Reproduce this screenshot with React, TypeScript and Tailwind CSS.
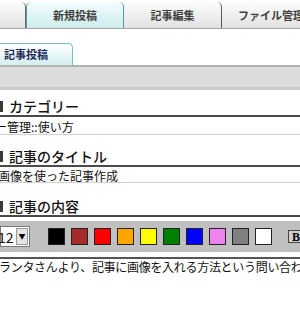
const FONT = "font-['Noto_Sans_CJK_JP','Noto_Sans',sans-serif]"

const SWATCHES = [
  'bg-[#000000]',
  'bg-[#a52a2a]',
  'bg-[#ff0000]',
  'bg-[#ffa500]',
  'bg-[#ffff00]',
  'bg-[#008000]',
  'bg-[#0000ff]',
  'bg-[#ee82ee]',
  'bg-[#808080]',
  'bg-[#ffffff]',
]

const Heading = ({ label }: { label: string }) => (
  <div className="flex h-[19px] items-center border-b-2 border-[#4a4a4a]">
    <span className="ml-[-7px] h-[11px] w-[10px] bg-[#3a3a3a]" />
    <span className="ml-[6px] text-[14px] font-medium leading-[19px] text-[#111]">{label}</span>
  </div>
)

export default function App() {
  return (
    <div className={`h-[320px] w-[300px] overflow-hidden bg-white ${FONT}`}>
      {/* main tabs */}
      <div className="flex h-[29px] border-b border-[#a8a8a8] bg-gradient-to-b from-[#ffffff] to-[#e2e2e2] pt-[2px]">
        <div className="w-[26px] shrink-0 rounded-tr-[5px] border-r border-[#6a6a6a]" />
        <div className="flex w-[98px] shrink-0 items-center justify-center rounded-t-[5px] border-x border-[#4f9c9c] bg-gradient-to-b from-[#f4fdfd] to-[#cdeced]">
          <span className="text-[11px] font-bold text-[#404040]">新規投稿</span>
        </div>
        <div className="flex w-[98px] shrink-0 items-center justify-center rounded-tr-[5px] border-r border-[#5a5a5a]">
          <span className="text-[11px] font-bold text-[#404040]">記事編集</span>
        </div>
        <div className="flex w-[98px] shrink-0 items-center justify-center rounded-tl-[5px]">
          <span className="text-[11px] font-bold text-[#404040]">ファイル管理</span>
        </div>
      </div>

      {/* sub tab */}
      <div className="mt-[14px] flex h-[22px]">
        <div className="flex w-[73px] items-center rounded-tr-[5px] border-r border-t border-[#7cbcbc] bg-gradient-to-b from-[#ffffff] to-[#d4eeee] pl-[4px]">
          <span className="text-[11px] font-bold text-[#1c2a58]">記事投稿</span>
        </div>
      </div>
      <div className="h-[25px] border-t-2 border-b-[3px] border-t-[#b2b2b2] border-b-[#cacaca] bg-[#dcdcdc]" />

      {/* category */}
      <div className="mt-[8px]">
        <Heading label="カテゴリー" />
        <div className="h-[18px] border-b border-[#d2d2d2] pt-[2px]">
          <span className="ml-[-5px] block text-[12px] leading-[16px] text-[#111]">ー管理::使い方</span>
        </div>
      </div>

      {/* title */}
      <div className="mt-[13px]">
        <Heading label="記事のタイトル" />
        <div className="h-[16px] border-b border-[#d2d2d2] pt-[1px]">
          <span className="ml-[-2px] block text-[12px] leading-[15px] text-[#111]">画像を使った記事作成</span>
        </div>
      </div>

      {/* body */}
      <div className="mt-[15px]">
        <Heading label="記事の内容" />
        <div className="mt-[4px] flex h-[31px] items-center bg-[#c0c0c0]">
          <div className="flex h-[21px] w-[30px] shrink-0 items-center justify-between border border-[#7a7a7a] bg-white pr-[1px]">
            <span className="ml-[-3px] text-[14px] leading-none text-[#111]">12</span>
            <span className="flex h-[17px] w-[12px] items-center justify-center border border-[#9a9a9a] bg-[#e4e4e4] text-[7px] text-black">
              ▼
            </span>
          </div>
          <div className="ml-[18px] flex gap-[6px]">
            {SWATCHES.map((c) => (
              <span key={c} className={`h-[17px] w-[17px] shrink-0 border border-[#222] ${c}`} />
            ))}
          </div>
          <span className="ml-[16px] flex h-[13px] w-[16px] shrink-0 items-center justify-center border border-[#444] bg-[#d0d0d0] font-['Liberation_Serif',serif] text-[12px] font-bold text-black">
            B
          </span>
        </div>
        <div className="mt-[5px] border-t-2 border-[#555]">
          <span className="ml-[-1px] block whitespace-nowrap text-[12px] leading-[16px] tracking-[-0.3px] text-[#111]">
            ランタさんより、記事に画像を入れる方法という問い合わせ
          </span>
        </div>
      </div>
    </div>
  )
}
